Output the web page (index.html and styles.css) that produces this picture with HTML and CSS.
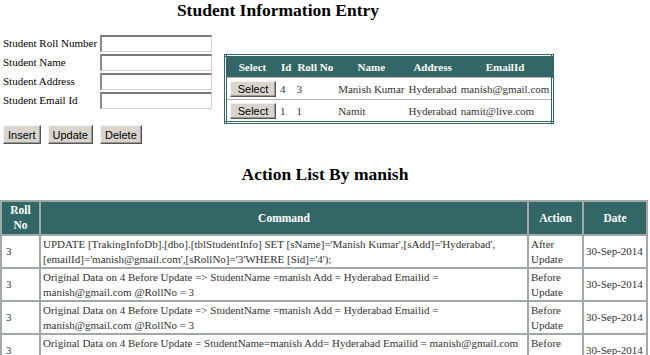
FILE: index.html
```html
<!doctype html>
<html lang="en">
<head>
    <meta charset="UTF-8">
    <title>Student Information Entry</title>
    <link rel="stylesheet" href="styles.css">
</head>
<body>
<div class="top">
    <h2 class="title">Student Information Entry</h2>
    <div class="entry">
        <div class="leftside">
            <div class="form">
                <label>Student Roll Number</label><input type="text">
                <label>Student Name</label><input type="text">
                <label>Student Address</label><input type="text">
                <label>Student Email Id</label><input type="text">
            </div>
            <div class="btns">
                <button class="btn">Insert</button>
                <button class="btn">Update</button>
                <button class="btn">Delete</button>
            </div>
        </div>
        <table class="grid">
            <tr>
                <th>Select</th>
                <th>Id</th>
                <th>Roll No</th>
                <th>Name</th>
                <th>Address</th>
                <th>EmailId</th>
            </tr>
            <tr>
                <td><button class="btn sel">Select</button></td>
                <td>4</td>
                <td>3</td>
                <td>Manish Kumar</td>
                <td>Hyderabad</td>
                <td>manish@gmail.com</td>
            </tr>
            <tr>
                <td><button class="btn sel">Select</button></td>
                <td>1</td>
                <td>1</td>
                <td>Namit</td>
                <td>Hyderabad</td>
                <td>namit@live.com</td>
            </tr>
        </table>
    </div>
</div>

<h2 class="title2">Action List By manish</h2>

<table class="log">
    <tr>
        <th class="c1">Roll<br>No</th>
        <th class="c2">Command</th>
        <th class="c3">Action</th>
        <th class="c4">Date</th>
    </tr>
    <tr>
        <td>3</td>
        <td>UPDATE [TrakingInfoDb].[dbo].[tblStudentInfo] SET [sName]='Manish Kumar',[sAdd]='Hyderabad', [emailId]='manish@gmail.com',[sRollNo]='3'WHERE [Sid]='4');</td>
        <td>After Update</td>
        <td class="date">30-Sep-2014</td>
    </tr>
    <tr>
        <td>3</td>
        <td>Original Data on 4 Before Update =&gt; StudentName =manish Add = Hyderabad Emailid = manish@gmail.com @RollNo = 3</td>
        <td>Before Update</td>
        <td class="date">30-Sep-2014</td>
    </tr>
    <tr>
        <td>3</td>
        <td>Original Data on 4 Before Update =&gt; StudentName =manish Add = Hyderabad Emailid = manish@gmail.com @RollNo = 3</td>
        <td>Before Update</td>
        <td class="date">30-Sep-2014</td>
    </tr>
    <tr>
        <td>3</td>
        <td>Original Data on 4 Before Update = StudentName=manish Add= Hyderabad Emailid = manish@gmail.com @RollNo = 3</td>
        <td>Before Update</td>
        <td class="date">30-Sep-2014</td>
    </tr>
</table>
</body>
</html>
```

FILE: styles.css
```css
body {
    margin: 0;
    font-family: "Liberation Serif", "Times New Roman", serif;
    font-size: 11px;
    color: #000;
    background: #fff;
}

.top {
    width: 556px;
}

.title, .title2 {
    margin: 0;
    font-size: 17.5px;
    line-height: 20px;
    text-align: center;
}

.entry {
    display: flex;
    align-items: flex-start;
    margin-top: 15px;
    padding-left: 3px;
}

.form {
    display: grid;
    grid-template-columns: 97px 112px;
    row-gap: 2px;
    align-items: center;
}

.form label {
    line-height: 17px;
    white-space: nowrap;
}

.form input {
    width: 112px;
    height: 17px;
    box-sizing: border-box;
    margin: 0;
    padding: 0;
    border: 1px solid #d0d0d0;
    border-top: 2px solid #7a7a7a;
    border-left: 2px solid #8a8a8a;
    background: #fff;
}

.btns {
    display: flex;
    gap: 7px;
    margin-top: 16px;
}

.btn {
    font-family: "Liberation Sans", Arial, sans-serif;
    font-size: 11px;
    height: 19px;
    padding: 0 4px;
    margin: 0;
    background: #d9d5cd;
    color: #000;
    border: 1px solid;
    border-color: #f4f4f4 #555 #555 #f4f4f4;
    box-shadow: inset -1px -1px 0 #999;
}

.grid {
    margin-left: 12px;
    margin-top: 19px;
    border-collapse: collapse;
    border: 3px double #336666;
    background: #fff;
    color: #333;
}

.grid th {
    background: #336666;
    color: #fff;
    font-weight: bold;
    height: 20px;
    padding: 0 3px;
    white-space: nowrap;
}

.grid td {
    height: 21px;
    padding: 0 2px;
    border-top: 1px solid #b5b5b5;
    white-space: nowrap;
}

.grid td:first-child {
    padding-left: 3px;
}

.btn.sel {
    height: 16px;
    width: 46px;
    padding: 0;
}

.title2 {
    margin-top: 20px;
}

.log {
    margin-top: 16px;
    width: 648px;
    border-collapse: collapse;
    border: 2px solid #a0a8a8;
    color: #333;
    table-layout: fixed;
}

.log th {
    background: #336666;
    color: #fff;
    font-weight: bold;
    font-size: 11.5px;
    height: 32px;
    line-height: 15px;
    padding: 0 2px;
    border: 2px solid #a0a8a8;
    border-top: 0;
}

.log th.c1 {
    width: 33px;
}

.log th.c3 {
    width: 49px;
}

.log th.c4 {
    width: 58px;
}

.log td {
    height: 31px;
    line-height: 15px;
    padding: 0 2px;
    border: 2px solid #a0a8a8;
    vertical-align: middle;
}

.log td:first-child {
    padding-left: 4px;
}

.log td.date {
    white-space: nowrap;
}
```
